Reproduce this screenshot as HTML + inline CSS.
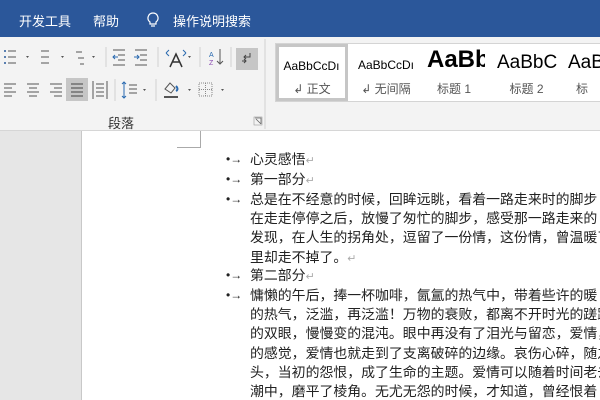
<!DOCTYPE html>
<html><head><meta charset="utf-8"><style>
*{margin:0;padding:0;box-sizing:border-box}
body{width:600px;height:400px;overflow:hidden;position:relative;background:#fff;font-family:"Liberation Sans","Noto Sans CJK SC",sans-serif}
.top{position:absolute;left:0;top:0;width:600px;height:37px;background:#2b579a;color:#fff;font-size:13px}
.top span{position:absolute;top:11px}
.rib{position:absolute;left:0;top:37px;width:600px;height:94px;background:#f3f3f3;border-bottom:1px solid #d6d6d6}
.ab{position:absolute}
.gal{position:absolute;left:275px;top:43px;width:330px;height:59px;background:#fff;border:1px solid #d4d4d4;border-right:none}
.it{position:absolute;top:0;height:57px;text-align:center;color:#000}
.it .a{position:absolute;left:0;right:0;white-space:nowrap}
.it .b{position:absolute;left:0;right:0;top:36px;font-size:12px;color:#555}
.doc{position:absolute;left:0;top:131px;width:600px;height:269px}
.gray{position:absolute;left:0;top:0;width:82px;height:269px;background:#e6e6e6;border-right:1px solid #c8c8c8}
.ln{position:absolute;left:250px;font-size:13.9px;white-space:nowrap;color:#222;line-height:16px}
.bl{position:absolute;left:226px;font-size:12px;color:#222;line-height:16px;white-space:nowrap}
.pm{color:#aaa;font-size:11px}
</style></head><body>
<div class="top"><span style="left:19px">开发工具</span><span style="left:93px">帮助</span>
<svg class="ab" style="left:147px;top:12px" width="12" height="16" viewBox="0 0 12 16"><path d="M6 1a5 5 0 0 0-3 9v2h6v-2a5 5 0 0 0-3-9z" fill="none" stroke="#fff" stroke-width="1.2"/><path d="M4 14h4" stroke="#fff" stroke-width="1.2"/></svg>
<span style="left:173px">操作说明搜索</span></div>
<div class="rib">
<svg class="ab" style="left:0;top:0" width="270" height="94" viewBox="0 0 270 94" stroke="#555" fill="none" stroke-width="1">
<g fill="#5a7fb0" stroke="none"><rect x="4" y="13" width="2" height="2"/><rect x="4" y="19" width="2" height="2"/><rect x="4" y="25" width="2" height="2"/></g>
<path d="M8 14h8M8 20h8M8 26h8M41 14h8M41 20h8M41 26h8M76 15h6M78 21h6M80 27h4"/>
<g fill="#555" stroke="none"><path d="M26 19l3 0-1.5 2z M61 19l3 0-1.5 2z M92 19l3 0-1.5 2z M188 19l3 0-1.5 2z"/></g>
<path d="M106 10v20M158 10v20M200 10v20M231 10v20" stroke="#d0d0d0"/>
<path d="M113 13h12M118 18h7M118 23h7M113 28h12M135 13h12M140 18h7M140 23h7M135 28h12"/>
<path d="M118 20h-5M115 18l-2 2 2 2M134 20h5M137 18l2 2-2 2" stroke="#2a6ab0"/>
<path d="M170 30l6-13 6 13M172 25h8" stroke="#333" stroke-width="1.5"/>
<path d="M166 16l3-3M166 16l3 3M186 16l-3-3M186 16l-3 3" stroke="#2a6ab0"/>
<text x="209" y="20" font-size="7" fill="#2a6ab0" stroke="none" font-family="Liberation Sans">A</text>
<text x="209" y="28" font-size="7" fill="#8a4ab0" stroke="none" font-family="Liberation Sans">Z</text>
<path d="M220 12v15M217 24l3 3 3-3"/>
<rect x="236" y="11" width="22" height="22" fill="#c6c6c6" stroke="none"/>
<path d="M250 16v4h-6M246 18l-2 2 2 2M242 24h4M244 22l2 2-2 2" stroke="#444"/>
<path d="M4 47h12M4 51h8M4 55h12M4 59h8M27 47h12M29 51h8M27 55h12M29 59h8M50 47h12M54 51h8M50 55h12M54 59h8"/>
<rect x="66" y="41" width="22" height="23" fill="#c6c6c6" stroke="none"/>
<path d="M71 47h12M71 51h12M71 55h12M71 59h12" stroke="#444"/>
<path d="M93 44v18M107 44v18M96 51h8M96 55h8M96 59h8M96 47h8" />
<path d="M115 42v22M156 42v22" stroke="#d0d0d0"/>
<path d="M124 45v16M122 47l2-2 2 2M122 59l2 2 2-2" stroke="#2a6ab0"/>
<path d="M129 48h8M129 52h8M129 56h8"/>
<g fill="#555" stroke="none"><path d="M143 52l3 0-1.5 2z M188 52l3 0-1.5 2z M221 52l3 0-1.5 2z"/></g>
<path d="M165 52l5-6 5 5-4 5z"/><path d="M176 49c2 2 2 4 0 5" stroke="#2a6ab0" stroke-width="2"/>
<path d="M164 60h14" stroke="#555" stroke-width="2"/>
<rect x="199" y="46" width="13" height="13" stroke="#888" stroke-dasharray="1 1"/><path d="M205.5 46v13M199 52.5h13" stroke="#888" stroke-dasharray="1 1"/>
<path d="M265 2v90" stroke="#d0d0d0"/>
<path d="M255 81h6v6M256 82l5 5" stroke="#666" stroke-width=".8"/><rect x="254" y="80" width="8" height="8" stroke="#999" stroke-width=".6"/>
</svg>
<div class="ab" style="left:108px;top:76px;font-size:13px;color:#333">段落</div>
</div>
<div class="gal">
<div class="it" style="left:0;width:72px;border:3px solid #c6c6c6"><div class="a" style="top:12px;font-size:12px;left:-1px">AaBbCcDı</div><div class="b" style="top:33px">↲ 正文</div></div>
<div class="it" style="left:74px;width:72px"><div class="a" style="top:14px;font-size:12px">AaBbCcDı</div><div class="b">↲ 无间隔</div></div>
<div class="it" style="left:147px;width:62px;overflow:hidden"><div class="a" style="top:2px;font-size:24px;font-weight:bold;left:4px;text-align:left">AaBb</div><div class="b">标题 1</div></div>
<div class="it" style="left:218px;width:65px;overflow:hidden"><div class="a" style="top:8px;font-size:19px;left:3px;text-align:left">AaBbC</div><div class="b">标题 2</div></div>
<div class="it" style="left:292px;width:40px;overflow:hidden"><div class="a" style="top:8px;font-size:19px;text-align:left">AaB</div><div class="b" style="text-align:left;left:8px">标</div></div>
</div>
<div class="doc">
<div class="gray"></div>
<div class="ab" style="left:177px;top:0;width:24px;height:17px;border-right:1px solid #aaa;border-bottom:1px solid #aaa"></div>
<div class="bl" style="top:20px">•→</div><div class="ln" style="top:20px">心灵感悟<span class="pm">↵</span></div>
<div class="bl" style="top:40px">•→</div><div class="ln" style="top:40px">第一部分<span class="pm">↵</span></div>
<div class="bl" style="top:60px">•→</div><div class="ln" style="top:60px">总是在不经意的时候，回眸远眺，看着一路走来时的脚步</div>
<div class="ln" style="top:79px">在走走停停之后，放慢了匆忙的脚步，感受那一路走来的</div>
<div class="ln" style="top:98px">发现，在人生的拐角处，逗留了一份情，这份情，曾温暖了</div>
<div class="ln" style="top:118px">里却走不掉了。<span class="pm">↵</span></div>
<div class="bl" style="top:136px">•→</div><div class="ln" style="top:136px">第二部分<span class="pm">↵</span></div>
<div class="bl" style="top:156px">•→</div><div class="ln" style="top:156px">慵懒的午后，捧一杯咖啡，氤氲的热气中，带着些许的暖</div>
<div class="ln" style="top:175px">的热气，泛滥，再泛滥！万物的衰败，都离不开时光的蹉跎</div>
<div class="ln" style="top:194px">的双眼，慢慢变的混沌。眼中再没有了泪光与留恋，爱情，</div>
<div class="ln" style="top:214px">的感觉，爱情也就走到了支离破碎的边缘。哀伤心碎，随之</div>
<div class="ln" style="top:233px">头，当初的怨恨，成了生命的主题。爱情可以随着时间老去</div>
<div class="ln" style="top:252px">潮中，磨平了棱角。无尤无怨的时候，才知道，曾经恨着</div>
</div>
</body></html>
